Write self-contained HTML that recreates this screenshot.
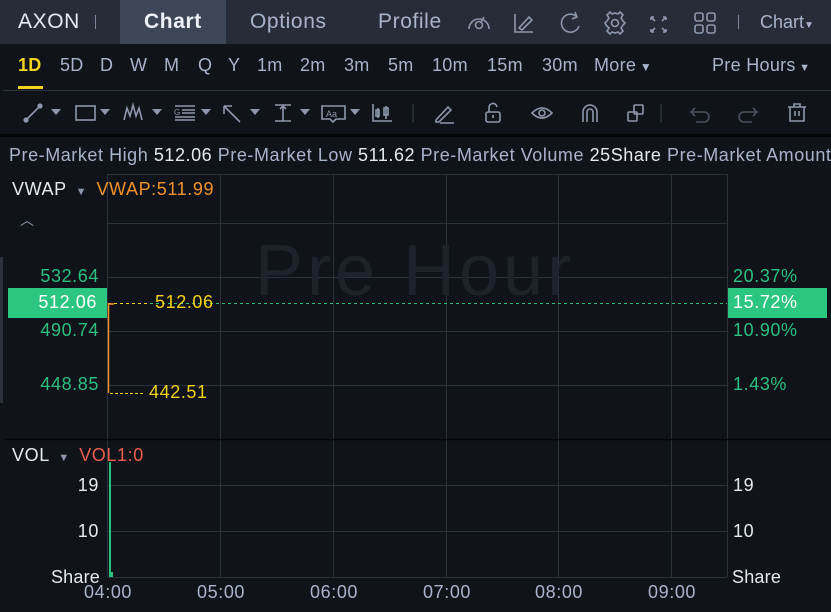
<!DOCTYPE html>
<html><head><meta charset="utf-8"><style>
*{margin:0;padding:0;box-sizing:border-box}
body{width:831px;height:612px;overflow:hidden;background:#10131a;font-family:"Liberation Sans",sans-serif;position:relative;color:#c9cfe0}
.a{position:absolute;white-space:nowrap}
.hdr{left:0;top:0;width:831px;height:44px;background:#272c38}
.tab{top:0;height:44px;line-height:44px;font-size:21px;color:#a9b3cc;letter-spacing:0.6px}
.tf{top:55px;font-size:18px;color:#a9b3cc;letter-spacing:0.3px}
.g{stroke:#2c313d;stroke-width:1}
.grn{color:#2bc07e}
.yl{color:#f1d11a}
.n{font-size:18px;letter-spacing:0.6px}
</style></head><body>
<div class="a hdr"></div>
<div class="a" style="left:120px;top:0;width:106px;height:44px;background:#3d4657"></div>
<div class="a tab" style="left:18px;color:#e6e9f2">AXON</div>
<div class="a" style="left:95px;top:15px;width:1px;height:14px;background:#7d859a"></div>
<div class="a tab" style="left:144px;color:#eef1f7;font-weight:bold">Chart</div>
<div class="a tab" style="left:250px">Options</div>
<div class="a tab" style="left:378px">Profile</div>
<svg class="a" style="left:465px;top:8px" width="280" height="30" fill="none" stroke="#8e97ad" stroke-width="1.6">
<path d="M4 21 A10 10 0 1 1 24 21"/><circle cx="14" cy="17" r="3.5"/><path d="M16 14 L19 9"/>
<path d="M50 6 V24 H68 M54 20 L64 9 L67 12 L57 22 Z"/>
<path d="M112 9 A9 9 0 1 0 114 18 M110 4 L112 9 L107 11"/>
<circle cx="150" cy="15" r="3.5"/><path d="M150 5 L153 6 L155 4 L158 7 L156 10 L158 13 L160 15 L158 17 L156 20 L158 23 L155 26 L153 24 L150 25 L147 24 L145 26 L142 23 L144 20 L141 17 L140 15 L142 13 L144 10 L142 7 L145 4 L147 6 Z"/>
<path d="M186 9 L190 13 M186 9 V12 M186 9 H189 M201 9 L197 13 M201 9 V12 M201 9 H198 M186 24 L190 20 M186 24 V21 M186 24 H189 M201 24 L197 20 M201 24 V21 M201 24 H198"/>
<rect x="230" y="5" width="8" height="8" rx="2"/><rect x="242" y="5" width="8" height="8" rx="2"/><rect x="230" y="17" width="8" height="8" rx="2"/><rect x="242" y="17" width="8" height="8" rx="2"/>
</svg>
<div class="a" style="left:738px;top:15px;width:1px;height:14px;background:#7d859a"></div>
<div class="a tab" style="left:760px;font-size:18px;letter-spacing:0">Chart<span style="font-size:10px">▼</span></div>

<div class="a tf" style="left:18px;color:#f2d21b;font-weight:bold">1D</div>
<div class="a" style="left:18px;top:86px;width:25px;height:3px;background:#f2d21b"></div>
<div class="a tf" style="left:60px">5D</div>
<div class="a tf" style="left:100px">D</div>
<div class="a tf" style="left:130px">W</div>
<div class="a tf" style="left:164px">M</div>
<div class="a tf" style="left:198px">Q</div>
<div class="a tf" style="left:228px">Y</div>
<div class="a tf" style="left:257px">1m</div>
<div class="a tf" style="left:300px">2m</div>
<div class="a tf" style="left:344px">3m</div>
<div class="a tf" style="left:388px">5m</div>
<div class="a tf" style="left:432px">10m</div>
<div class="a tf" style="left:487px">15m</div>
<div class="a tf" style="left:542px">30m</div>
<div class="a tf" style="left:594px">More<span style="font-size:12px"> ▼</span></div>
<div class="a tf" style="left:712px">Pre Hours<span style="font-size:11px"> ▼</span></div>
<div class="a" style="left:3px;top:90px;width:828px;height:1px;background:#2c313d"></div>

<svg class="a" style="left:20px;top:98px" width="800" height="30" fill="none" stroke="#8e97ad" stroke-width="1.6">
<path d="M6 22 L20 8"/><circle cx="6" cy="22" r="1.8" fill="#8e97ad"/><circle cx="20" cy="8" r="1.8" fill="#8e97ad"/>
<path d="M31 11 H41 L36 17 Z" fill="#8e97ad" stroke="none"/>
<rect x="56" y="8" width="19" height="14"/><path d="M80 11 H90 L85 17 Z" fill="#8e97ad" stroke="none"/>
<path d="M104 22 L107 10 L110 18 L113 7 L116 18 L119 10 L122 22"/><path d="M132 11 H142 L137 17 Z" fill="#8e97ad" stroke="none"/>
<path d="M155 8 H175 M162 12 H175 M162 15 H175 M155 19 H175 M155 22 H175"/><text x="154" y="17" font-size="8" fill="#8e97ad" stroke="none">G</text><path d="M181 11 H191 L186 17 Z" fill="#8e97ad" stroke="none"/>
<path d="M204 8 L220 24 M204 8 V16 M204 8 H212"/><path d="M230 11 H240 L235 17 Z" fill="#8e97ad" stroke="none"/>
<path d="M255 7 H271 M255 23 H271 M263 7 V23 M260 11 L263 8 L266 11"/><path d="M280 11 H290 L285 17 Z" fill="#8e97ad" stroke="none"/>
<path d="M302 8 H325 V21 H316 L313 24 L310 21 H302 Z"/><text x="306" y="19" font-size="9" fill="#8e97ad" stroke="none">Aa</text><path d="M330 11 H340 L335 17 Z" fill="#8e97ad" stroke="none"/>
<path d="M353 6 V23 H372 M358 10 V20 M366 8 V21"/><rect x="356" y="12" width="3" height="6"/><rect x="364" y="10" width="4" height="7"/>
<path d="M393 6 V25" stroke="#2c313d"/>
<path d="M416 22 L428 9 L431 12 L419 24 H416 Z M420 25 H434"/>
<rect x="466" y="14" width="14" height="10" rx="2"/><path d="M469 14 V10 A4 4 0 0 1 477 9 M473 17 V20"/>
<path d="M512 15 Q522 5 532 15 Q522 25 512 15 Z"/><circle cx="522" cy="15" r="3"/>
<path d="M563 24 V14 A7 7 0 0 1 577 14 V24 M567 24 V14 A3 3 0 0 1 573 14 V24"/>
<rect x="608" y="14" width="9" height="9" rx="1"/><rect x="614" y="7" width="9" height="9" rx="1"/>
<path d="M641 6 V25" stroke="#2c313d"/>
<path d="M675 10 L671 14 L675 18 M671 14 H684 A5 5 0 0 1 684 24 H676" stroke="#4a5060"/>
<path d="M733 10 L737 14 L733 18 M737 14 H724 A5 5 0 0 0 724 24 H732" stroke="#4a5060"/>
<path d="M768 9 H786 M774 9 V6 H780 V9 M770 9 V23 H784 V9 M775 13 V18 M779 13 V18"/>
</svg>
<div class="a" style="left:0;top:134px;width:831px;height:3px;background:#050608"></div>

<div class="a" style="left:9px;top:145px;font-size:18px;letter-spacing:0.55px;color:#a9b3cc">Pre-Market High <span style="color:#e6e9f2">512.06</span> Pre-Market Low <span style="color:#e6e9f2">511.62</span> Pre-Market Volume <span style="color:#e6e9f2">25Share</span> Pre-Market Amount</div>

<svg class="a" style="left:0;top:0" width="831" height="612">
<g class="g">
<line x1="107.5" y1="174" x2="107.5" y2="577"/><line x1="220.5" y1="174" x2="220.5" y2="577"/><line x1="333.5" y1="174" x2="333.5" y2="577"/><line x1="446.5" y1="174" x2="446.5" y2="577"/><line x1="558.5" y1="174" x2="558.5" y2="577"/><line x1="671.5" y1="174" x2="671.5" y2="577"/><line x1="727.5" y1="174" x2="727.5" y2="577"/>
<line x1="107" y1="174.5" x2="727" y2="174.5"/><line x1="107" y1="223.5" x2="727" y2="223.5"/><line x1="107" y1="277.5" x2="727" y2="277.5"/><line x1="107" y1="331.5" x2="727" y2="331.5"/><line x1="107" y1="385.5" x2="727" y2="385.5"/>
<line x1="107" y1="485.5" x2="727" y2="485.5"/><line x1="107" y1="531.5" x2="727" y2="531.5"/><line x1="107" y1="577.5" x2="727" y2="577.5"/>
</g>
<line x1="5" y1="439.5" x2="831" y2="439.5" stroke="#050608" stroke-width="1.5"/>
<rect x="0" y="257" width="3" height="146" fill="#2c313d"/>
<text x="415" y="295" font-size="72" letter-spacing="4" fill="#1e222b" text-anchor="middle" font-family="Liberation Sans">Pre Hour</text>
<line x1="108" y1="303.5" x2="727" y2="303.5" stroke="#2bc07e" stroke-dasharray="3,3"/>
<line x1="108" y1="303.5" x2="150" y2="303.5" stroke="#f1d11a" stroke-dasharray="3,3"/>
<line x1="110" y1="393.5" x2="143" y2="393.5" stroke="#f1d11a" stroke-dasharray="3,2"/>
<path d="M108.5 393 V304 H114" stroke="#f0922a" stroke-width="1.5" fill="none"/>
<rect x="109" y="462" width="2" height="115" fill="#2bc07e"/><rect x="109" y="572" width="4" height="5" fill="#2bc07e"/>
</svg>

<div class="a n" style="left:12px;top:179px;color:#e6e9f2">VWAP <span style="color:#8e97ad;font-size:11px">&nbsp;▼&nbsp;</span> <span style="color:#f0922a">VWAP:511.99</span></div>
<div class="a" style="left:20px;top:210px;font-size:14px;color:#8e97ad">︿</div>
<div class="a grn n" style="right:732px;top:266px">532.64</div>
<div class="a" style="left:8px;top:288px;width:99px;height:30px;background:#2bc67f"></div>
<div class="a n" style="right:734px;top:292px;color:#fff">512.06</div>
<div class="a grn n" style="right:732px;top:320px">490.74</div>
<div class="a grn n" style="right:732px;top:374px">448.85</div>
<div class="a yl n" style="left:155px;top:292px">512.06</div>
<div class="a yl n" style="left:149px;top:382px">442.51</div>
<div class="a grn n" style="left:733px;top:266px">20.37%</div>
<div class="a" style="left:728px;top:288px;width:99px;height:30px;background:#2bc67f"></div>
<div class="a n" style="left:733px;top:292px;color:#fff">15.72%</div>
<div class="a grn n" style="left:733px;top:320px">10.90%</div>
<div class="a grn n" style="left:733px;top:374px">1.43%</div>

<div class="a n" style="left:12px;top:445px;color:#e6e9f2">VOL <span style="color:#8e97ad;font-size:11px">&nbsp;▼&nbsp;</span> <span style="color:#ee5e4c">VOL1:0</span></div>
<div class="a n" style="right:732px;top:475px;color:#e6e9f2">19</div>
<div class="a n" style="right:732px;top:521px;color:#e6e9f2">10</div>
<div class="a n" style="right:731px;top:567px;color:#e6e9f2;letter-spacing:0.2px">Share</div>
<div class="a n" style="left:733px;top:475px;color:#e6e9f2">19</div>
<div class="a n" style="left:733px;top:521px;color:#e6e9f2">10</div>
<div class="a n" style="left:732px;top:567px;color:#e6e9f2;letter-spacing:0.2px">Share</div>
<div class="a n" style="left:84px;top:582px;color:#a9b3cc">04:00</div>
<div class="a n" style="left:197px;top:582px;color:#a9b3cc">05:00</div>
<div class="a n" style="left:310px;top:582px;color:#a9b3cc">06:00</div>
<div class="a n" style="left:423px;top:582px;color:#a9b3cc">07:00</div>
<div class="a n" style="left:535px;top:582px;color:#a9b3cc">08:00</div>
<div class="a n" style="left:648px;top:582px;color:#a9b3cc">09:00</div>
</body></html>
